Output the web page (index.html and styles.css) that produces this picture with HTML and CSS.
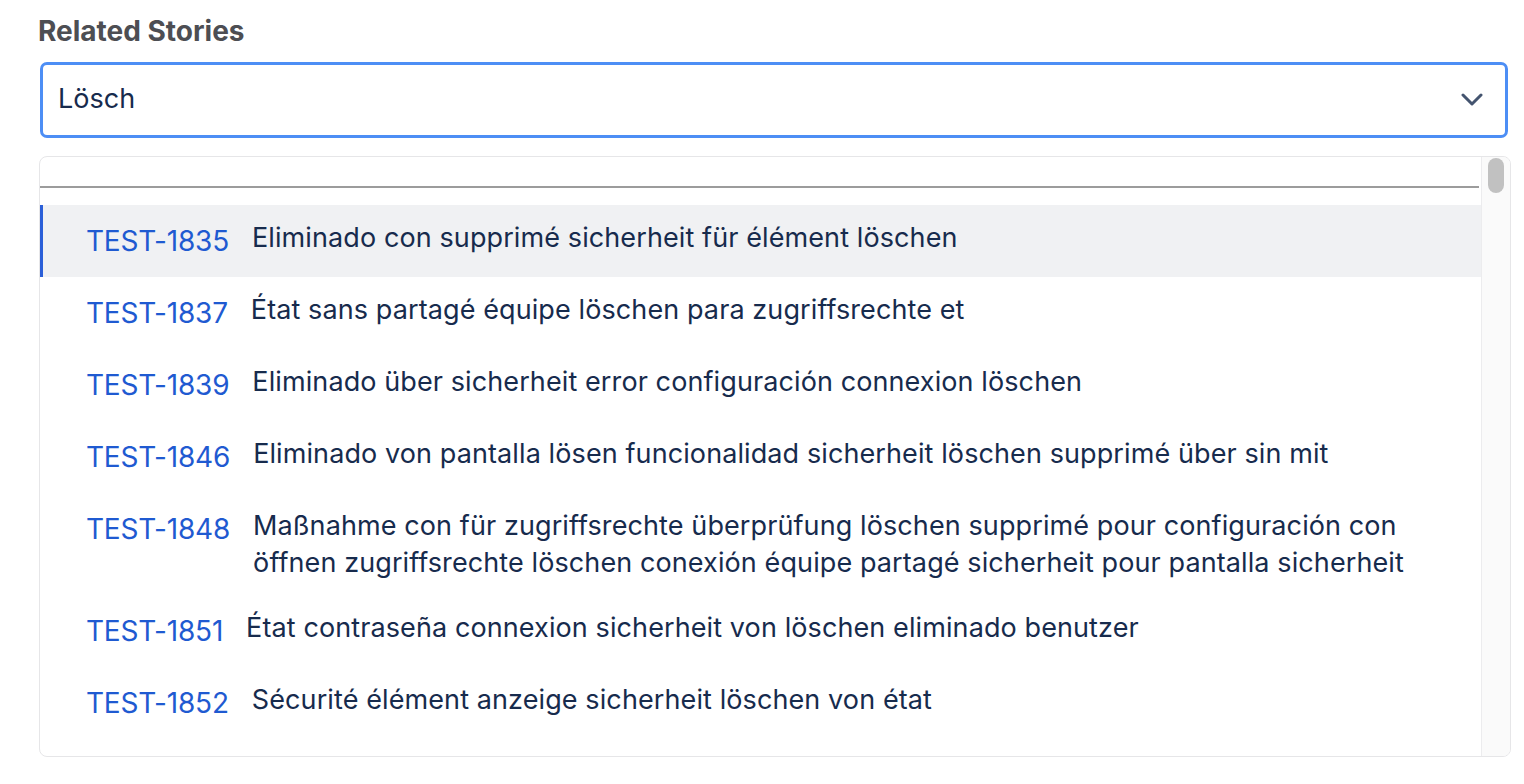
FILE: index.html
```html
<!DOCTYPE html>
<html>
<head>
<meta charset="utf-8">
<link rel="stylesheet" href="styles.css">
</head>
<body>
<div class="field">
  <div class="label">Related Stories</div>
  <div class="select">
    <span class="value">Lösch</span>
    <svg class="chevron" width="22" height="14" viewBox="0 0 22 14"><path d="M2 2 L11 11 L20 2" fill="none" stroke="#44546f" stroke-width="3" stroke-linecap="round" stroke-linejoin="round"/></svg>
  </div>
  <div class="menu">
    <div class="list">
      <div class="list-head"></div>
      <div class="rule"></div>
      <div class="rows">
        <div class="row active"><span class="key">TEST-1835</span><span class="title">Eliminado con supprimé sicherheit für élément löschen</span></div>
        <div class="row"><span class="key">TEST-1837</span><span class="title">État sans partagé équipe löschen para zugriffsrechte et</span></div>
        <div class="row"><span class="key">TEST-1839</span><span class="title">Eliminado über sicherheit error configuración connexion löschen</span></div>
        <div class="row"><span class="key">TEST-1846</span><span class="title">Eliminado von pantalla lösen funcionalidad sicherheit löschen supprimé über sin mit</span></div>
        <div class="row"><span class="key">TEST-1848</span><span class="title">Maßnahme con für zugriffsrechte überprüfung löschen supprimé pour configuración con öffnen zugriffsrechte löschen conexión équipe partagé sicherheit pour pantalla sicherheit</span></div>
        <div class="row"><span class="key">TEST-1851</span><span class="title">État contraseña connexion sicherheit von löschen eliminado benutzer</span></div>
        <div class="row"><span class="key">TEST-1852</span><span class="title">Sécurité élément anzeige sicherheit löschen von état</span></div>
      </div>
    </div>
    <div class="scrollbar"><div class="thumb"></div></div>
  </div>
</div>
</body>
</html>
```
FILE: styles.css
```css
html, body {
  margin: 0;
  padding: 0;
  background: #ffffff;
  font-family: Inter, "Noto Sans", "Liberation Sans", sans-serif;
}
.field {
  width: 1472px;
  margin-left: 39px;
  padding-top: 13px;
}
.label {
  font-size: 28px;
  font-weight: 700;
  color: #4d4e53;
  line-height: 36px;
  margin-left: -1px;
}
.select {
  margin-top: 13px;
  margin-left: 1px;
  width: 1468px;
  height: 76px;
  box-sizing: border-box;
  border: 3px solid #4d8ef5;
  border-radius: 7px;
  display: flex;
  align-items: center;
  justify-content: space-between;
  padding: 0 22px 0 15px;
}
.value {
  font-size: 27px;
  line-height: 34px;
  margin-top: -2px;
  color: #172b4d;
}
.chevron {
  display: block;
}
.menu {
  margin-top: 18px;
  height: 601px;
  box-sizing: border-box;
  border: 1px solid #e6e6e8;
  border-radius: 8px;
  overflow: hidden;
  display: flex;
}
.list {
  flex: 1;
  min-width: 0;
}
.list-head {
  height: 29px;
}
.rule {
  height: 2px;
  background: #9c9c9c;
  margin-right: 2px;
}
.rows {
  padding-top: 17px;
}
.row {
  display: flex;
  align-items: flex-start;
  gap: 23px;
  padding: 14.5px 40px 14.5px 43px;
  border-left: 3px solid transparent;
}
.row.active {
  background: #f0f1f3;
  border-left-color: #2b5fd8;
}
.key {
  flex: none;
  font-size: 28px;
  letter-spacing: -0.2px;
  line-height: 43px;
  color: #1f5ad1;
}
.title {
  font-size: 27px;
  letter-spacing: 0.1px;
  line-height: 37px;
  margin-top: -1px;
  color: #172b4d;
}
.scrollbar {
  width: 29px;
  flex: none;
  background: #fafafa;
  border-left: 1px solid #ececee;
  box-sizing: border-box;
  padding: 1px 6px 0 6px;
}
.thumb {
  width: 16px;
  height: 35px;
  border-radius: 8px;
  background: #c1c1c1;
}
```
